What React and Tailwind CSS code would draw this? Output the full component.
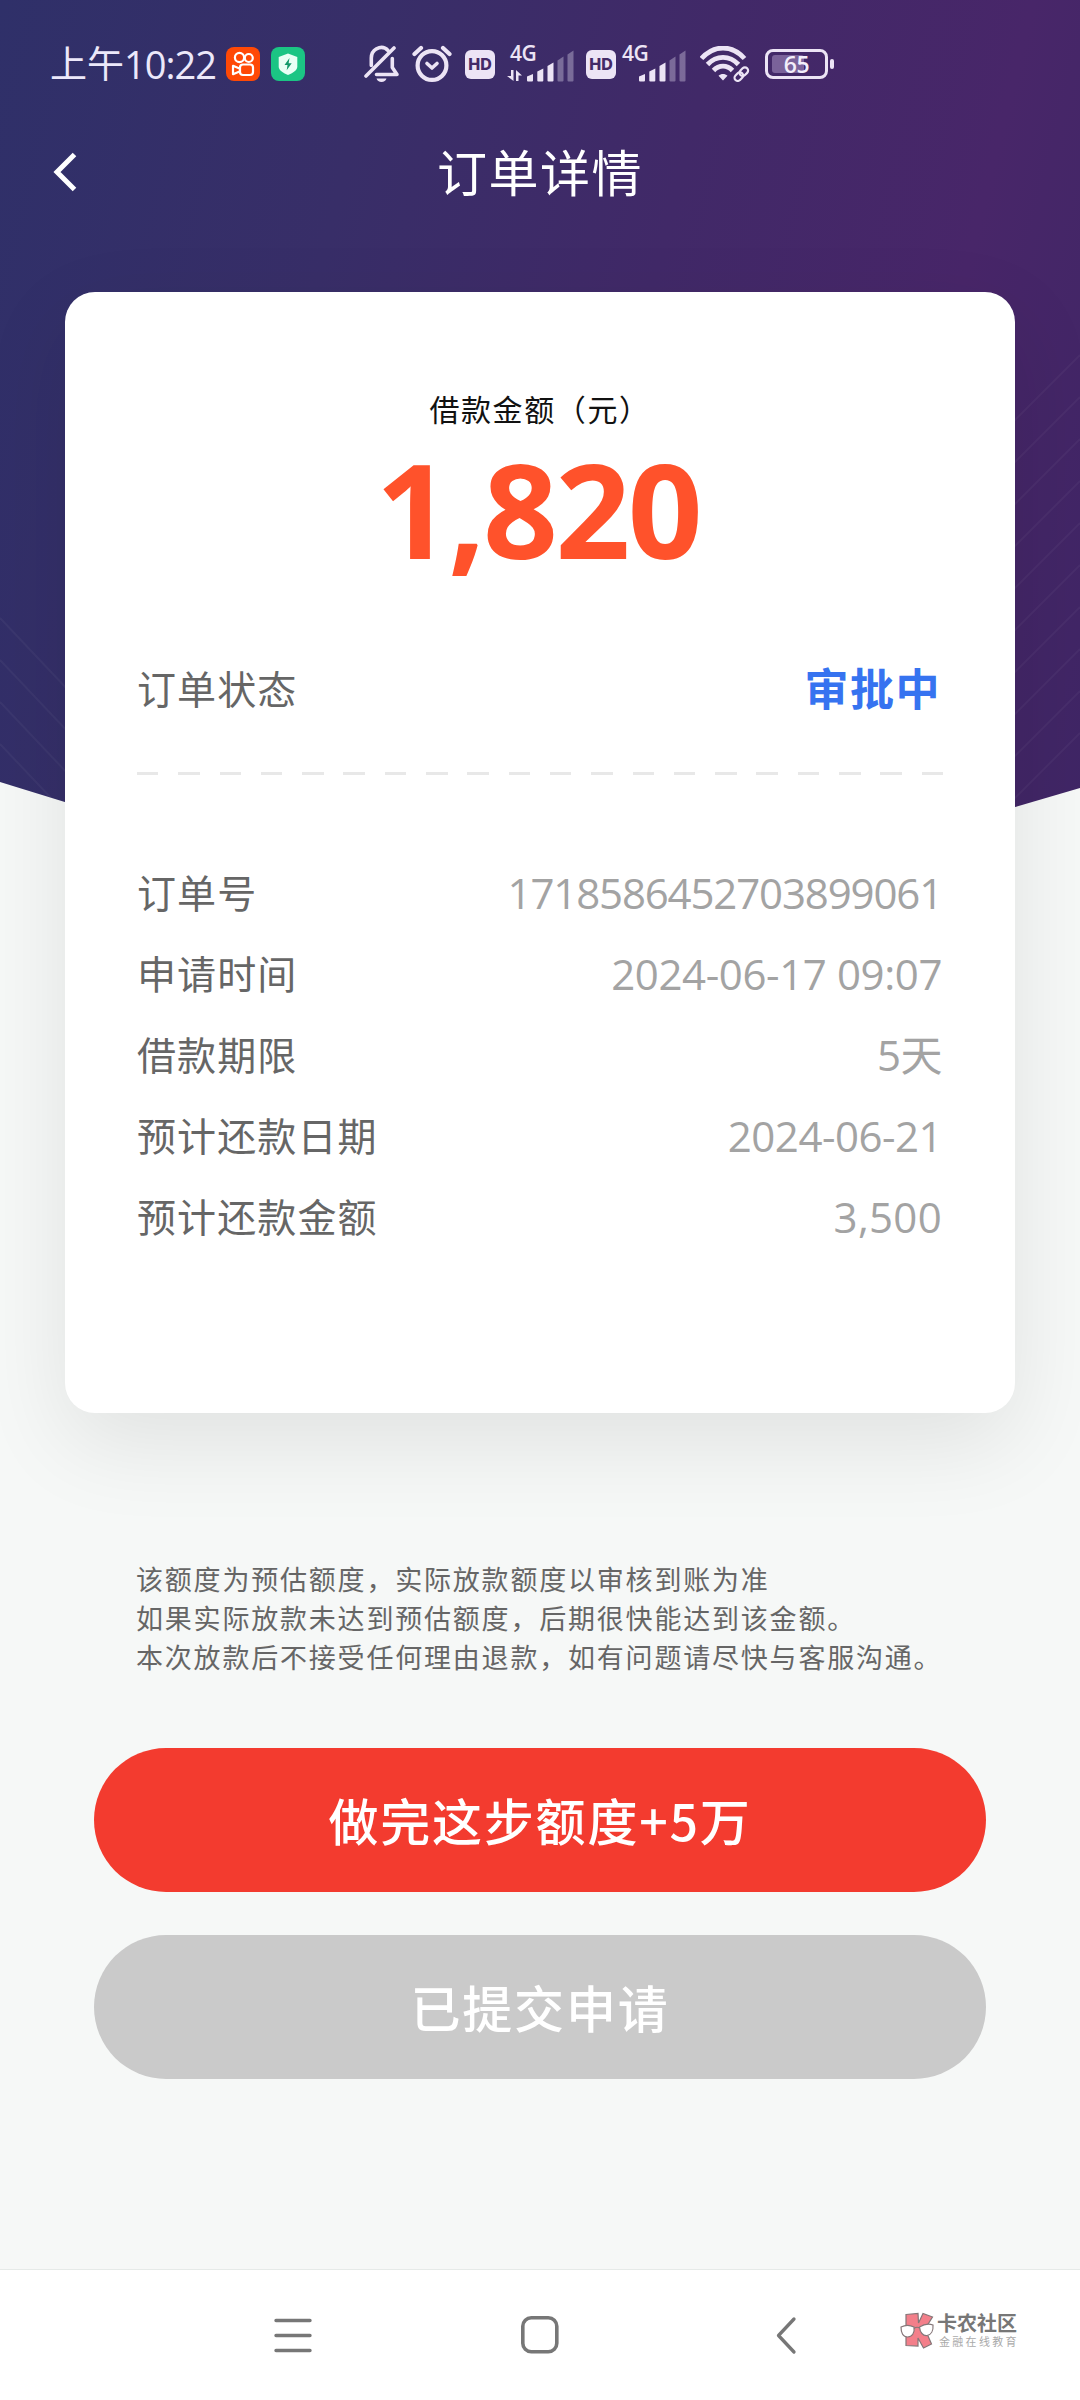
import React from "react";

const cjk = "font-['Noto_Sans_CJK_SC',sans-serif]";

const details = [
  { label: "订单号", value: "1718586452703899061", tracking: "tracking-[-1.15px]" },
  { label: "申请时间", value: "2024-06-17 09:07", tracking: "tracking-[-0.4px]" },
  { label: "借款期限", value: "5天", tracking: "tracking-[-0.5px]" },
  { label: "预计还款日期", value: "2024-06-21", tracking: "tracking-[-0.5px]" },
  { label: "预计还款金额", value: "3,500", tracking: "tracking-[0.3px]" },
];

const KuaishouIcon = () => (
  <svg width="34" height="34" viewBox="0 0 34 34" fill="none" stroke="#fff" strokeWidth="2.2">
    <rect width="34" height="34" rx="8" fill="#ff4906" stroke="none" />
    <circle cx="13.5" cy="10.5" r="4.6" />
    <circle cx="22.8" cy="11" r="4" />
    <rect x="14" y="17.5" width="13" height="10.5" rx="3" />
    <path d="M13.5 21.5 7 18.8v8.4l6.5-2.7" strokeLinejoin="round" />
  </svg>
);

const ShieldIcon = () => (
  <svg width="34" height="34" viewBox="0 0 34 34">
    <rect width="34" height="34" rx="8" fill="#1bc584" />
    <path d="M17 6.5 26.3 10v9.5c0 4-4.8 6.8-9.3 8.5-4.5-1.7-9.3-4.5-9.3-8.5V10z" fill="#e9fff5" />
    <path d="m18.5 11-5 7h3l-.8 5.2 5-7h-3.1z" fill="#14996a" />
  </svg>
);

const BellOffIcon = () => (
  <svg width="36" height="38" viewBox="0 0 36 38" fill="none" stroke="#ece4f5" strokeWidth="3.6" strokeLinecap="round" strokeLinejoin="round">
    <path d="M24 5.5C21 2.3 16.5 1.8 12.5 3.8 9 5.8 7.3 9 7.3 13v7.5" />
    <path d="M2 31 30 3" />
    <path d="M12.5 29.5H33l-4.7-7V13.5" />
    <path d="M12.5 33.5h10c-.6 2.2-2.5 3.5-5 3.5s-4.4-1.3-5-3.5z" fill="#ece4f5" stroke="none" />
  </svg>
);

const AlarmIcon = () => (
  <svg width="40" height="38" viewBox="0 0 40 38" fill="none" stroke="#ece4f5" strokeLinecap="round" strokeLinejoin="round">
    <circle cx="20" cy="20.5" r="14.4" strokeWidth="4.2" />
    <path d="m15 18.5 5 4.5 5-4.5" strokeWidth="3.6" />
    <path d="m2.5 9 6.5-6M37.5 9 31 3" strokeWidth="4.2" />
  </svg>
);

const Hd = () => (
  <span className="flex h-[29px] w-[30px] items-center justify-center rounded-[6px] bg-[#ece4f5] font-['Inter',sans-serif] text-[16px] font-extrabold text-[#432a67]">
    HD
  </span>
);

const SignalIcon = ({ arrows }) => (
  <svg width="66" height="36" viewBox="0 0 66 36" fill="#ece4f5" className="overflow-visible">
    {arrows && <path d="M4 24h2.5v11L0 30h4zM9 35V24l6 5.5h-3.5V35z" />}
    <path d="M20 30.5 26 28v6.5a1 1 0 0 1-1 1h-4a1 1 0 0 1-1-1z" />
    <path d="m30.3 25.5 6-3v12a1 1 0 0 1-1 1h-4a1 1 0 0 1-1-1z" />
    <path d="m40.5 20 6-3.5v18a1 1 0 0 1-1 1h-4a1 1 0 0 1-1-1z" />
    <path d="m50.5 14.5 6-4v24a1 1 0 0 1-1 1h-4a1 1 0 0 1-1-1z" opacity=".35" />
    <path d="m60.5 8.5 6-4v30a1 1 0 0 1-1 1h-4a1 1 0 0 1-1-1z" opacity=".35" />
  </svg>
);

const Signal = ({ arrows }) => (
  <div className="relative h-9 w-[66px]">
    <SignalIcon arrows={arrows} />
    <span className="absolute left-[3px] top-[-4px] font-['Open_Sans',sans-serif] text-[21px] font-semibold leading-[22px] tracking-[-0.5px] text-[#ece4f5]">
      4G
    </span>
  </div>
);

const WifiIcon = () => (
  <svg width="50" height="36" viewBox="0 0 50 36" fill="none" stroke="#ece4f5">
    <path d="M1.5 12.5C14-1.5 32-1.5 44.5 12.5" strokeWidth="4.8" />
    <path d="M7.5 18.5c9-9.5 22-9.5 31 0" strokeWidth="4.8" />
    <path d="M13.5 24.5c5.5-5.8 13.5-5.8 19 0" strokeWidth="4.8" />
    <path d="M23 34.5l-4.5-4.8c2.5-2.2 6.5-2.2 9 0z" fill="#ece4f5" stroke="none" />
    <g strokeWidth="2.2" transform="rotate(-45 41.5 28)">
      <rect x="33" y="24.8" width="9.5" height="6.4" rx="3.2" />
      <rect x="40" y="24.8" width="9.5" height="6.4" rx="3.2" />
    </g>
  </svg>
);

const Battery = () => (
  <div className="flex items-center gap-[2px]">
    <div className="relative flex h-[30px] w-[63px] items-center justify-center rounded-[8px] border-[3px] border-[#ece4f5]">
      <div className="absolute left-[4px] top-[3px] h-[18px] w-[32px] rounded-[3px] bg-[#7a629a]" />
      <span className="relative font-['Open_Sans',sans-serif] text-[23px] font-semibold leading-none tracking-[-0.3px] text-[#f3eefa]">65</span>
    </div>
    <div className="h-[10px] w-[4px] rounded-full bg-[#ece4f5]" />
  </div>
);

const StatusBar = () => (
  <div className="flex h-32 items-center pl-[50px]">
    <div className="flex w-[176px] items-center text-[#ece8fa]">
      <span className={`${cjk} mb-[3px] text-[37px] leading-none`}>上午</span>
      <span className="mb-px font-['Open_Sans',sans-serif] text-[38px] font-medium leading-none tracking-[-1px]">10:22</span>
    </div>
    <KuaishouIcon />
    <div className="ml-[11px]"><ShieldIcon /></div>
    <div className="ml-[59px]"><BellOffIcon /></div>
    <div className="ml-[12px]"><AlarmIcon /></div>
    <div className="ml-[13px]"><Hd /></div>
    <div className="ml-[12px]"><Signal arrows /></div>
    <div className="ml-[13px]"><Hd /></div>
    <div className="ml-[3px]"><Signal /></div>
    <div className="ml-[15px]"><WifiIcon /></div>
    <div className="ml-[15px]"><Battery /></div>
  </div>
);

const HeaderBackground = () => (
  <div className="absolute inset-x-0 top-0 h-[850px] bg-[linear-gradient(104deg,#2f3069_0%,#382e68_30%,#412968_56%,#482669_80%,#3f2665_100%)] [clip-path:polygon(0_0,100%_0,100%_788px,94%_807px,75%_840px,25%_838px,6%_802px,0_782px)]">
    <svg width="1080" height="850" fill="none" stroke="#fff" strokeOpacity=".04" strokeWidth="2">
      {[0, 1, 2, 3, 4, 5, 6, 7, 8, 9].map((i) => (
        <path key={i} d={`M1010 ${425 + i * 42}L1080 ${355 + i * 42}`} />
      ))}
      {[0, 1, 2, 3].map((i) => (
        <path key={i} d={`M0 ${618 + i * 42}L70 ${692 + i * 42}`} />
      ))}
    </svg>
  </div>
);

const OrderCard = () => (
  <div className="mx-[65px] h-[1121px] rounded-[30px] bg-white px-[72px] pt-[94px] shadow-[0_30px_90px_rgba(0,0,0,0.09)]">
    <p className={`${cjk} text-center text-[30px] leading-[44px] tracking-[1.6px] text-[#111]`}>借款金额（元）</p>
    <p className="mt-[13px] pr-1 text-center font-['Open_Sans',sans-serif] text-[131px] font-bold leading-[130px] tracking-[-2.5px] text-[#ff522b]">
      1,820
    </p>
    <div className="mt-[84px] flex h-[60px] items-center justify-between">
      <span className={`${cjk} text-[39px] tracking-[1.1px] text-[#666]`}>订单状态</span>
      <span className={`${cjk} pr-[2px] text-[44px] font-bold tracking-[1.5px] text-[#3673f0]`}>审批中</span>
    </div>
    <div className="mt-[55px] h-[3px] w-[806px] bg-[repeating-linear-gradient(90deg,#e8e8e8_0,#e8e8e8_21.5px,transparent_21.5px,transparent_41.3px)]" />
    <div className="mt-[78px]">
      {details.map((item) => (
        <div key={item.label} className="flex h-[81px] items-center justify-between">
          <span className={`${cjk} pb-[4px] text-[39px] tracking-[1.1px] text-[#666]`}>{item.label}</span>
          <span className={`pb-[2px] pr-px font-['Open_Sans','Noto_Sans_CJK_SC',sans-serif] text-[42px] text-[#a3a3a3] ${item.tracking}`}>{item.value}</span>
        </div>
      ))}
    </div>
  </div>
);

const Watermark = () => (
  <div className="flex items-center gap-[3px]">
    <svg width="34" height="37" viewBox="0 0 34 37" stroke="#857678" strokeWidth="1.2">
      <path d="M6 2.5 18 1.5 18.5 11 23 1.5 32.5 5 25 17 31.5 32 23.5 36 18 26v8L6 33.5z" fill="#f37f8a" />
      <path d="M1 15c4-2 9-2 13 0 1 6-2 10-6.5 10S1 21 1 15zM19.5 15c4-2.5 9-3.5 13.5-2 .5 6-2 10-6 10.5s-7-3-7.5-8.5z" fill="#fff" />
      <path d="M14 16.5c2-1.5 4-1.5 5.5-.5" fill="none" />
    </svg>
    <div className={`${cjk} flex flex-col`}>
      <span className="text-[20px] font-bold leading-[20px] text-[#777]">卡农社区</span>
      <span className="ml-[2px] mt-[2px] text-[11px] leading-[13px] tracking-[2.3px] text-[#aaa]">金融在线教育</span>
    </div>
  </div>
);

const NavBar = () => (
  <div className="flex h-[130px] items-center bg-white pl-[273px] shadow-[0_-1px_0_#e6eae8]">
    <svg width="39" height="40" viewBox="0 0 39 40" stroke="#777" strokeWidth="3.4" strokeLinecap="round">
      <path d="M3 5.5h34M3 20.5h34M3 35.5h34" />
    </svg>
    <svg className="ml-[208px]" width="40" height="40" viewBox="0 0 40 40" fill="none" stroke="#777" strokeWidth="3.6">
      <rect x="2.8" y="2.8" width="34" height="34" rx="8.5" />
    </svg>
    <svg className="ml-[216px]" width="22" height="40" viewBox="0 0 22 40" fill="none" stroke="#777" strokeWidth="3.3" strokeLinecap="round" strokeLinejoin="round">
      <path d="M18 4 2.5 20.5 18 37" />
    </svg>
    <div className="ml-[102px] mt-[-9px]">
      <Watermark />
    </div>
  </div>
);

export default function App() {
  return (
    <div className="relative h-[2400px] w-[1080px] overflow-hidden bg-[#f6f8f7]">
      <HeaderBackground />
      <div className="relative flex h-full flex-col">
        <StatusBar />
        <div className="grid h-[164px] grid-cols-3 items-start pt-[8px]">
          <svg className="ml-[48px] mt-[14px]" width="30" height="44" viewBox="0 0 30 44" fill="none" stroke="#fff" strokeWidth="5">
            <path d="M26.5 4.5 9 22l17.5 17.5" />
          </svg>
          <h1 className={`${cjk} text-center text-[50px] leading-[68px] tracking-[1.5px] text-white`}>订单详情</h1>
        </div>
        <OrderCard />
        <div className={`${cjk} ml-[136px] mt-[147px] text-[27px] leading-[38.8px] tracking-[1.8px] text-[#666]`}>
          <p>该额度为预估额度，实际放款额度以审核到账为准</p>
          <p>如果实际放款未达到预估额度，后期很快能达到该金额。</p>
          <p>本次放款后不接受任何理由退款，如有问题请尽快与客服沟通。</p>
        </div>
        <div className={`${cjk} mx-[94px] mt-[72px] flex flex-col gap-[43px] text-[50px] font-medium tracking-[1.8px] text-white`}>
          <button className="h-[144px] rounded-full bg-[#f33b2f] pb-[2px]">做完这步额度+5万</button>
          <button className="h-[144px] rounded-full bg-[#cacaca] pb-[2px]">已提交申请</button>
        </div>
        <div className="mt-auto">
          <NavBar />
        </div>
      </div>
    </div>
  );
}
